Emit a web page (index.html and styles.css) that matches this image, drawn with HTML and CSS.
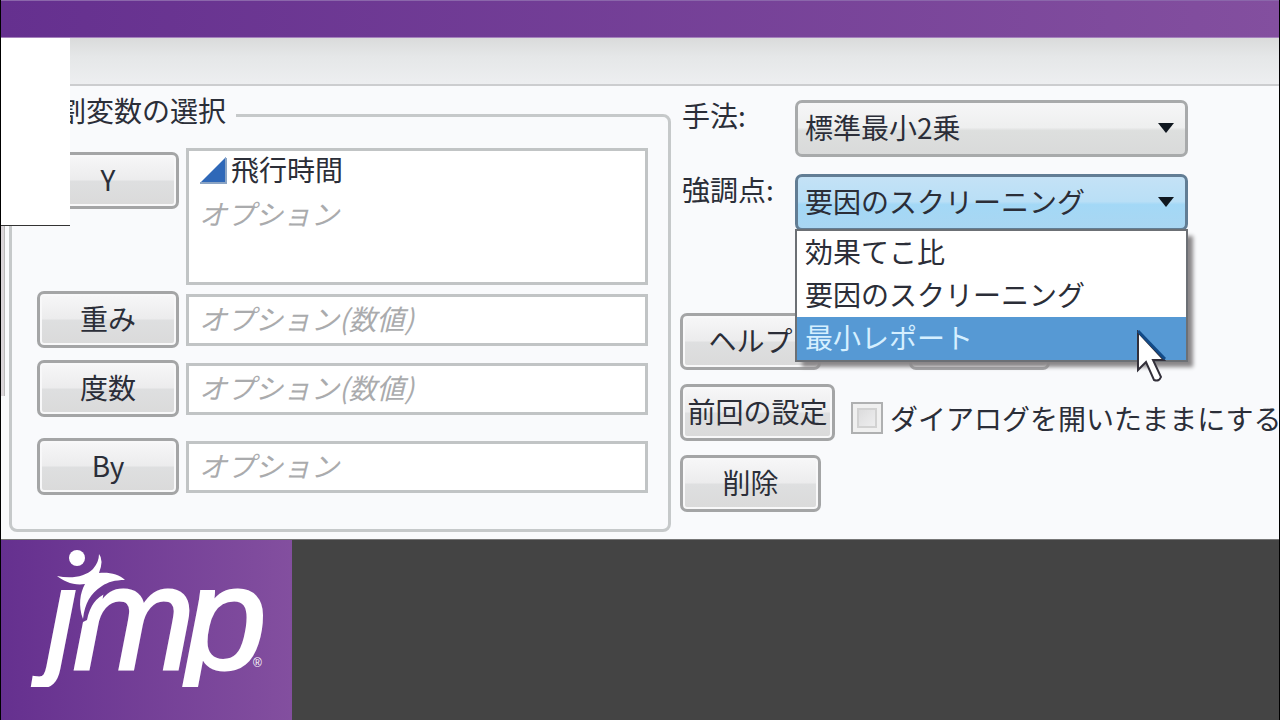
FILE: index.html
```html
<!DOCTYPE html>
<html lang="ja">
<head>
<meta charset="utf-8">
<title>モデルのあてはめ</title>
<link rel="stylesheet" href="styles.css">
</head>
<body>
<div class="screen">
  <header class="banner"></header>
  <div class="toolbar"></div>
  <main class="dialog">
    <div class="blank-panel"></div>
    <div class="edge-strip"></div>
    <fieldset class="roles">
      <legend class="roles-title">役割変数の選択</legend>
      <div class="role role-y">
        <button class="button" type="button">Y</button>
        <div class="list">
          <div class="list-item">
            <svg class="continuous" viewBox="0 0 28 28" aria-hidden="true"><path d="M1 26 27 0v26z" fill="#2f68b8"/><path d="M1 26h26V1" fill="none" stroke="#8ba4c4" stroke-width="2"/></svg>
            <span>飛行時間</span>
          </div>
          <div class="hint">オプション</div>
        </div>
      </div>
      <div class="role role-weight">
        <button class="button" type="button">重み</button>
        <input class="field" type="text" aria-label="重み" placeholder="オプション(数値)">
      </div>
      <div class="role role-freq">
        <button class="button" type="button">度数</button>
        <input class="field" type="text" aria-label="度数" placeholder="オプション(数値)">
      </div>
      <div class="role role-by">
        <button class="button" type="button">By</button>
        <input class="field" type="text" aria-label="By" placeholder="オプション">
      </div>
    </fieldset>
    <section class="options">
      <div class="option">
        <label class="option-label" for="method">手法:</label>
        <div class="picker">
          <select class="select" id="method"><option>標準最小2乗</option></select>
          <svg class="arrow" viewBox="0 0 16 10" aria-hidden="true"><path d="M0 0h16L8 10z" fill="currentColor"/></svg>
        </div>
      </div>
      <div class="option">
        <label class="option-label" for="emphasis">強調点:</label>
        <div class="picker picker-open">
          <select class="select select-open" id="emphasis"><option>要因のスクリーニング</option></select>
          <svg class="arrow" viewBox="0 0 16 10" aria-hidden="true"><path d="M0 0h16L8 10z" fill="currentColor"/></svg>
          <ul class="menu" role="listbox" aria-label="強調点">
            <li class="menu-item" role="option">効果てこ比</li>
            <li class="menu-item" role="option">要因のスクリーニング</li>
            <li class="menu-item menu-item-active" role="option" aria-selected="true">最小レポート</li>
          </ul>
          <svg class="cursor" viewBox="0 0 30 54" aria-hidden="true"><path d="M2 2v38l8-8 8 18q5 2 7-3l-8-17h11z" fill="#fff" stroke="#33303a" stroke-width="2"/><path d="M2 1l27 28" stroke="#124b88" stroke-width="3"/></svg>
        </div>
      </div>
      <div class="actions">
        <div class="action-row">
          <button class="button action" type="button">ヘルプ</button>
          <button class="button action action-covered" type="button"></button>
        </div>
        <div class="action-row">
          <button class="button action action-wide" type="button">前回の設定</button>
          <label class="keep"><input class="check" type="checkbox"><span>ダイアログを開いたままにする</span></label>
        </div>
        <div class="action-row">
          <button class="button action" type="button">削除</button>
        </div>
      </div>
    </section>
  </main>
  <footer class="footer">
    <div class="brand">
      <svg class="logo" viewBox="0 0 291 180" role="img" aria-label="jmp">
        <defs><clipPath id="descender"><path d="M0 0h292v147H0z"/></clipPath></defs>
        <g class="logo-text" clip-path="url(#descender)">
          <text class="logo-j" x="46" y="120">ȷ</text>
          <text class="logo-m" x="72" y="129">m</text>
          <text class="logo-p" x="184" y="129">p</text>
        </g>
        <path d="M78 47H106V53Q90 59 86 80L82 82z" fill="#6e3a94"/>
        <g fill="#fff">
          <circle cx="76" cy="18" r="8"/>
          <path d="M56 36C70 39 84 37 92 29Q98 22 98 14Q103 20 98 33C108 32 118 34 124 40C114 40 107 42 101 46C89 54 84 63 82 79C77 66 79 53 84 44C73 46 62 41 56 36z"/>
        </g>
        <text class="logo-mark" x="252" y="127">®</text>
      </svg>
    </div>
  </footer>
</div>
</body>
</html>
```
FILE: styles.css
```css
* {
  box-sizing: border-box;
}

body {
  margin: 0;
  background: #444;
  color: #2b2e38;
  font-family: "Noto Sans CJK JP", sans-serif;
  font-size: 28px;
  line-height: 36px;
}

button,
input,
select {
  font: inherit;
  color: inherit;
}

.screen {
  display: flex;
  flex-direction: column;
  min-height: 100vh;
  border: solid #000;
  border-width: 0 1px;
  overflow: hidden;
}

.banner {
  height: 38px;
  background: linear-gradient(90deg, #65308f, #834f9f);
  border-top: 1px solid #8b67ab;
  border-bottom: 1px solid #a582bd;
}

.toolbar {
  height: 48px;
  background: linear-gradient(#dadbdb, #e5e7e8 40%, #edeef0);
  border-bottom: 2px solid #cccdcf;
}

.dialog {
  position: relative;
  display: grid;
  grid-template-columns: minmax(0, 670fr) minmax(0, 608fr);
  padding-bottom: 7px;
  background: #f9fafc;
}

.blank-panel {
  position: absolute;
  z-index: 1;
  top: -48px;
  left: 0;
  width: 69px;
  height: 188px;
  background: #fff;
  border-bottom: 1px solid #333;
}

.edge-strip {
  position: absolute;
  top: 140px;
  left: 0;
  width: 4px;
  height: 170px;
  background: #dad5d9;
  border-right: 1px solid #bbb;
}

.roles {
  min-width: 0;
  margin: 10px 0 0 8px;
  padding: 14px 20px 34px 25px;
  border: 3px solid #c6c9ca;
  border-radius: 8px;
}

.roles-title {
  margin-left: -7px;
  padding: 0 10px 10px 0;
  line-height: 28px;
  white-space: nowrap;
}

.role {
  display: grid;
  grid-template-columns: 142px minmax(0, 1fr);
  align-items: center;
  gap: 7px;
}

.role-y {
  align-items: start;
}

.role-y .button {
  margin-top: 4px;
}

.role-weight {
  margin-top: 6px;
}

.role-freq {
  margin-top: 12px;
}

.role-by {
  margin-top: 21px;
}

.button {
  height: 57px;
  padding: 0 0 4px;
  background: linear-gradient(#f7f7f8, #ececed 48%, #dedfe0 52%, #dadada);
  border: 3px solid #a4a5a6;
  border-radius: 7px;
  box-shadow: inset 0 0 0 2px #f8f8f9;
  white-space: nowrap;
}

.list,
.field {
  width: 100%;
  background: #fff;
  border: 3px solid #c1c4c5;
  border-radius: 0;
}

.list {
  height: 137px;
  padding: 0 10px;
}

.list-item {
  display: flex;
  align-items: center;
  gap: 4px;
  height: 36px;
}

.continuous {
  width: 28px;
  height: 28px;
  margin-top: 4px;
}

.hint {
  padding-top: 8px;
  color: #aaabad;
  font-style: italic;
}

.field {
  height: 52px;
  padding: 0 10px 3px;
}

.field::placeholder {
  color: #aaabad;
  font-style: italic;
  opacity: 1;
}

.options {
  min-width: 0;
  padding: 14px 91px 0 9px;
}

.option {
  display: grid;
  grid-template-columns: 115px minmax(0, 1fr);
  margin-bottom: 17px;
}

.option-label {
  padding-left: 2px;
  line-height: 30px;
}

.picker {
  position: relative;
}

.select {
  display: block;
  width: 100%;
  height: 57px;
  padding: 0 40px 4px 7px;
  appearance: none;
  background: linear-gradient(#f6f6f7, #eeefef 48%, #dddfde 54%, #d9dada);
  border: 3px solid #a8aaab;
  border-radius: 7px;
}

.select-open {
  background: linear-gradient(#c4e2f6, #b9dff6 48%, #a3d8f6 54%, #a9d6f2);
  border-color: #627d94;
}

.arrow {
  position: absolute;
  top: 23px;
  right: 14px;
  width: 16px;
  height: 10px;
  color: #101820;
}

.menu {
  position: absolute;
  z-index: 2;
  top: 55px;
  left: 0;
  right: 0;
  margin: 0;
  padding: 0;
  list-style: none;
  background: #fff;
  border: 2px solid #6c7075;
  box-shadow: 6px 6px 4px -1px #8a8789;
}

.menu-item {
  height: 43px;
  padding-left: 8px;
  line-height: 41px;
  white-space: nowrap;
}

.menu-item-active {
  background: #5699d4;
  color: #d5efff;
}

.cursor {
  position: absolute;
  z-index: 3;
  top: 156px;
  right: 22px;
  width: 30px;
  height: 54px;
}

.actions {
  display: flex;
  flex-direction: column;
  gap: 14px;
  margin-top: 82px;
}

.action-row {
  display: flex;
  align-items: center;
  gap: 16px;
}

.action {
  flex: none;
  width: 141px;
}

.action-wide {
  width: 155px;
}

.action-covered {
  margin-left: 72px;
}

.keep {
  display: flex;
  align-items: center;
  flex: none;
  gap: 7px;
  padding-top: 10px;
  white-space: nowrap;
}

.check {
  width: 32px;
  height: 32px;
  margin: 0;
  appearance: none;
  background: linear-gradient(135deg, #d6d6d7, #f4f4f5);
  border: 2px solid #afb0b1;
  box-shadow: inset 0 0 0 4px #f0f0f0, inset 0 0 0 6px #d2d2d2;
}

.footer {
  display: flex;
  flex: 1;
  border-top: 1px solid #777;
  background: #444;
}

.brand {
  width: 291px;
  background: linear-gradient(90deg, #65308f, #834f9f);
}

.logo {
  display: block;
  width: 100%;
}

.logo-text {
  fill: #fff;
  stroke: #fff;
  stroke-width: 3px;
  font-style: italic;
}

.logo-j {
  font-family: "Liberation Sans", sans-serif;
  font-size: 130px;
}

.logo-m {
  font-family: "Liberation Sans Narrow", "Liberation Sans", sans-serif;
  font-size: 146px;
}

.logo-p {
  font-family: "Liberation Sans", sans-serif;
  font-size: 146px;
}

.logo-mark {
  fill: #fff;
  font-family: "Liberation Sans", sans-serif;
  font-size: 12px;
}
```
